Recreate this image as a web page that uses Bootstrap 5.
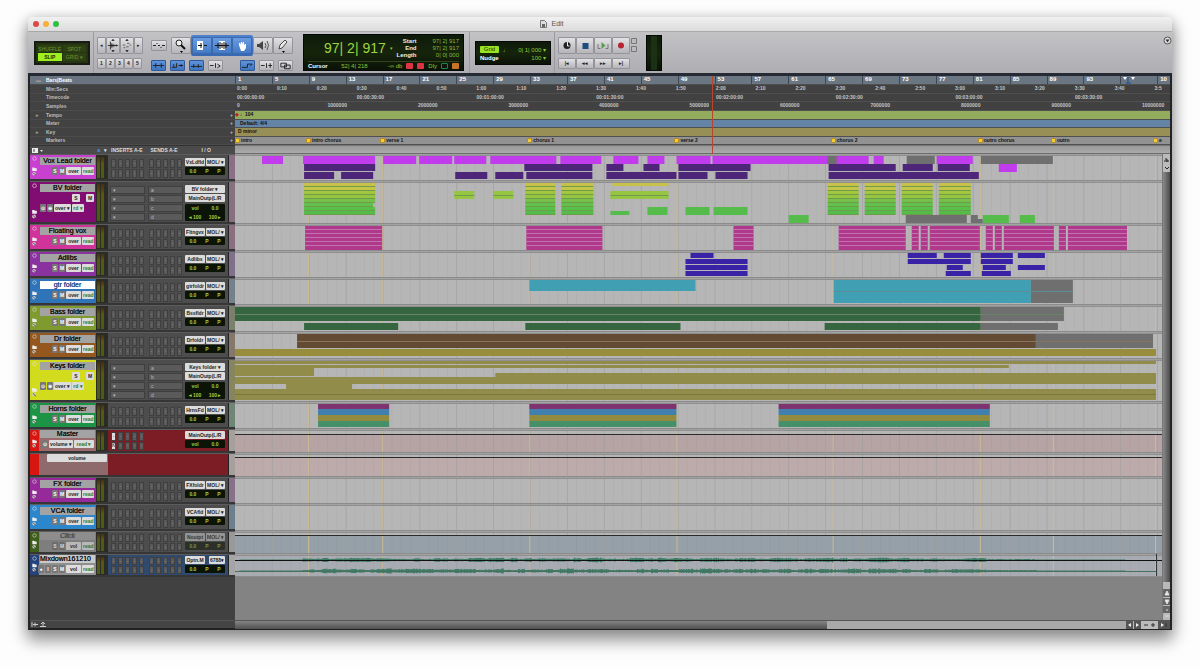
<!DOCTYPE html>
<html lang="en">
<head>
<meta charset="utf-8">
<meta name="viewport" content="width=device-width, initial-scale=1">
<title>Edit</title>
<link href="https://cdn.jsdelivr.net/npm/bootstrap@5.3.0/dist/css/bootstrap.min.css" rel="stylesheet">
<style>
body{background:#fdfdfd;font-family:"Liberation Sans",Arial,sans-serif;font-size:5px;line-height:8px;color:#222}
button,input,select{font:inherit;color:inherit;border:0;padding:0;margin:0;line-height:8px}
button{overflow:hidden;white-space:nowrap;text-align:center}
svg{display:block}
.win{margin:17px 28px 30px;border-radius:5px;box-shadow:0 9px 16px 2px #0006,0 0 12px #0002}
.titlebar{height:15px;background:linear-gradient(#f1f1f1,#dcdcdc);border-radius:5px 5px 0 0;border-bottom:1px solid #a9a9a9;position:relative;font-size:7px;color:#555}
.dot{width:6px;height:6px;border-radius:50%}
.lights{gap:4px;padding-left:5px}
.toolbar{height:41px;padding-left:6px;background:linear-gradient(#c3c3c6,#adadb2)}
.sep{width:1px;align-self:stretch;background:#9a9a9f;margin:0 3px}
.sep.wide{margin:0 5px}
.lcd{background:linear-gradient(#0e1a0a,#16240c 50%,#0a1206);border:1px solid #050805;color:#8ec63a}
.modes{width:56px;height:24px;padding:2px;border:2px solid #181d14;display:grid;grid-template-columns:1fr 1fr;gap:1px;background:#243311}
.modes button{background:#2d4014;color:#6c9430}
.modes button.on{background:#9ff021;color:#1c2b08;font-weight:bold}
.tb{background:linear-gradient(#e2e2e4,#b5b5ba);border:1px solid #94949a;border-radius:1px;display:flex;align-items:center;justify-content:center;color:#222}
.tb svg{width:100%;height:100%}
.tb.big{height:17px}.tb.sm{height:11px;font-weight:bold}
.w9{width:9px}.w14{width:14px}.w15{width:15px}.w16{width:16px}.w18{width:18px}.w20{width:20px}
.tb.blue{background:linear-gradient(#5f93da,#3f74c0);border-color:#2d5899}
.bluebox{background:linear-gradient(#4d82ce,#3768b2);border-radius:2px;padding:2px 1px}
.bluebox .tb{background:linear-gradient(#6a9ce0,#4379c6);border-color:#3b69a9}
.counter{width:161px;height:37px;margin-left:2px}
.cnt-main{font-size:14px;line-height:17px;color:#9ed53c;white-space:nowrap}
.cnt-lab{font-size:6px;line-height:7px;color:#eee;font-weight:bold}
.cnt-val{font-size:6px;line-height:7px;color:#86b93b;text-align:right;white-space:nowrap}
.cnt-foot{border-top:1px solid #34441f;height:9px;font-size:6px;white-space:nowrap}
.sq{width:7px;height:6px;border-radius:1px;display:inline-block}
.gridbox{width:76px;height:24px;font-size:6px}
.gridon{background:#98e51f;color:#20300a;width:19px;border-radius:1px;line-height:7px}
.main{background:#414141;border-left:2px solid #242424;border-right:2px solid #242424;border-bottom:2px solid #222;border-top:3px solid #252a34}
.side{width:205px;flex:none}
.rl{display:grid;grid-template-rows:9px 9px 8px 9px 9px 8px 9px 8px}
.rl>div{overflow:hidden;white-space:nowrap}
.side .rl>div{background:#424242;border-bottom:1px solid #4b4b4b;color:#bcbcbc;font-weight:bold;line-height:7px;display:flex;align-items:center}
.side .rl>div:first-child{background:#6a7480;color:#fff}
.side .rl i{width:16px;font-style:normal;padding-left:6px;color:#999}
.side .rl b{margin-left:auto;padding-right:2px}
.rulers>div{position:relative;border-bottom:1px solid #505050;color:#c4c4c4;line-height:7px;font-weight:bold}
.rulers>div:first-child{background:#6b7683;color:#fff}
.rulers .inner{position:absolute;inset:0 8px 0 0}
.rulers span{position:absolute;top:0;white-space:nowrap}
.rulers .tick{border-left:1px solid #3f4852;padding-left:2px;font-size:6px;height:8px}
.rulers .r-tempo{background:#92ab5c;color:#111}.rulers .r-meter{background:#6484a6;color:#111}
.rulers .r-key{background:#988f56;color:#111}.rulers .r-mark{background:#929292;color:#111}
.mk{display:inline-block;width:5px;height:5px;border-radius:1px;background:#f2cf3a;border:1px solid #b98b1c;margin-right:1px;vertical-align:-1px}
.colhead{height:9px;background:#4b4b4b;color:#ddd;font-weight:bold;border-top:1px solid #333}
.emptybar{height:9px;background:linear-gradient(#989898,#ababab);border-top:1px solid #777;border-bottom:1px solid #6b6b6b}
.trk{background:#4d4d4d;border-bottom:2px solid #363636;border-top:1px solid #5c5c5c;height:27px;overflow:hidden}
.trk.tall{height:43px}.trk.low{height:24px}.trk.mid{height:23px}
.strip{width:9px;flex:none}.strip svg{width:9px;height:100%}
.head{width:57px;flex:none;padding-top:2px}
.low .head,.mid .head{padding-top:0}
.tname{display:block;width:55px;height:8px;margin-left:1px;background:#a3a3a3;color:#151515;font-size:7px;text-align:center;text-shadow:0 0 0 #000}
.tname.sel{background:#fff;color:#2d62b8}
.tname.dim{color:#666}.tname.long{text-align:left;background:#c9c9cb}
.tbtn{background:#dcdcdc;color:#222;border-radius:1px;height:8px;line-height:8px;font-weight:bold;padding:0 1px;flex:none}
.tbtn.s{background:#777;color:#fff;width:6px}.tbtn.v{width:15px}.tbtn.r{width:12px;color:#277a33}
.tbtn.q{width:8px}.ctl{height:8px;gap:1px;margin-top:2px;justify-content:flex-end;padding-right:2px}
.meter{width:12px;flex:none;padding:2px 0 1px 1px;background:#2c2c26}
.meter div{width:3px;height:100%;background:linear-gradient(#4a2d10,#5a5712 30%,#485c14);margin-right:1px}
.slots{display:grid;grid-template-columns:repeat(5,5px);gap:1px 2px;width:38px;flex:none;padding:4px 0 1px 3px;grid-auto-rows:1fr}
.slots button{background:#5a5a5a;border:1px solid #3f3f3f;color:#bbb;line-height:5px}
.slots.rowsl{grid-template-columns:1fr;padding:4px 1px 1px 2px;gap:1px}
.slots.rowsl button{text-align:left;padding-left:2px}
.slots button.lit{background:#ddd;color:#111}
.mid .slots,.low .slots{padding-top:2px}
.io{width:42px;flex:none;padding:3px 1px 0;display:flex;flex-direction:column;gap:1px}
.mid .io,.low .io{padding-top:1px}
.io .tbtn{overflow:hidden}
.io .nm{width:20px;padding:0}
.vol{background:#0b1407;color:#a2cf45;font-weight:bold;height:8px;line-height:8px;border-radius:1px;display:flex;justify-content:space-around}
.vol.two{height:17px;flex-wrap:wrap;margin-top:1px}
.vol.two span{width:50%;text-align:center}
.tint{width:7px;flex:none;border-left:1px solid #222}
.lane{background:#b6b6b6;min-width:0}
.lane svg{width:100%;height:100%}
.vsb{width:8px;flex:none;background:linear-gradient(90deg,#8a8a8a,#4b4b4b);border-left:1px solid #777}
.vsb svg{width:7px}
.playline{position:absolute;top:0;bottom:0;width:1px;background:#b8452e}
.foot{height:8px;background:#444;border-top:1px solid #555}
.hsb{height:8px;background:#a9a9a9}
.hsb div{background:linear-gradient(#858585,#505050)}
.void{height:43px}
.autoh{background:#8f6a6d;width:69px}
.autoh select{width:60px;appearance:none;text-align:center}
</style>
</head>
<body>
<div class="win">
  <header class="titlebar d-flex align-items-center justify-content-center">
    <div class="position-absolute start-0 d-flex lights"><span class="dot" style="background:#df4744"></span><span class="dot" style="background:#f5b03a"></span><span class="dot" style="background:#2fc03f"></span></div>
    <svg width="7" height="8" viewBox="0 0 7 8"><path d="M.5.5h4l2 2v5h-6z" fill="#ddd" stroke="#777"/><path d="M2 4h3v3H2z" fill="#666"/></svg><span class="ms-1 me-5 pe-5">Edit</span>
  </header>
  <div class="toolbar d-flex align-items-center" id="toolbar">
    <div class="lcd modes"><button>SHUFFLE</button><button>SPOT</button><button class="on">SLIP</button><button>GRID ▾</button></div>
    <div class="sep"></div>
    <div class="d-flex flex-column gap-1 me-2">
      <div class="d-flex">
        <button class="tb big w9" aria-label="Zoom out">◂</button>
        <button class="tb big w14" aria-label="Audio zoom"><svg viewBox="0 0 14 15"><path d="M1 7.500h12M4 3v9M5.500 5v5M7 5.500v4M9 6.500v2M11 6.500v2" stroke="#222"/><path d="M5 2l2-2 2 2zM5 13l2 2 2-2z"/></svg></button>
        <button class="tb big w14" aria-label="MIDI zoom"><svg viewBox="0 0 14 15"><path d="M2 7h3M7 5h3M6 9h3M10 7h2M3 10h2" stroke="#555"/><path d="M5 2l2-2 2 2zM5 13l2 2 2-2z"/></svg></button>
        <button class="tb big w9" aria-label="Zoom in">▸</button>
      </div>
      <div class="d-flex"><button class="tb sm w9">1</button><button class="tb sm w9">2</button><button class="tb sm w9">3</button><button class="tb sm w9">4</button><button class="tb sm w9">5</button></div>
    </div>
    <div class="d-flex flex-column me-2">
      <div class="d-flex align-items-center">
        <button class="tb sm w16 me-1" aria-label="Zoom toggle"><svg viewBox="0 0 14 9"><path d="M1 4.500h3M10 4.500h3M6 4.500h2M5 2v1M9 6v1" stroke="#222"/></svg></button>
        <button class="tb big w20" aria-label="Zoomer"><svg viewBox="0 0 18 15"><circle cx="7" cy="5" r="3" fill="#eee" stroke="#222"/><path d="M9 7l4 4" stroke="#111" stroke-width="2"/><path d="M8 13h3l-1.500 2z"/></svg></button>
        <div class="bluebox d-flex">
          <button class="tb big w20" aria-label="Trim"><svg viewBox="0 0 18 15"><path d="M4 3h6v9H4z" fill="#fff"/><path d="M5 7.500h4M8 5v5M11 7.500h3" stroke="#111"/></svg></button>
          <button class="tb big w20" aria-label="Selector"><svg viewBox="0 0 18 15"><path d="M6 3h6v9H6z" fill="#fff"/><path d="M2 7.500h14M5 5v5M7 4v7M9 5v5M11 4v7M13 5v5" stroke="#111"/></svg></button>
          <button class="tb big w20" aria-label="Grabber"><svg viewBox="0 0 18 15"><path d="M6 7V5h1v2l1-3h1v2l1-2h1v3l1-1h1v4l-2 3H8z" fill="#fff"/></svg></button>
        </div>
        <button class="tb big w20" aria-label="Scrubber"><svg viewBox="0 0 18 15"><path d="M3 6h2l4-3v9L5 9H3z" fill="#444"/><path d="M11 5q2 2.500 0 5M13 3q3 4 0 9" fill="none" stroke="#555"/></svg></button>
        <button class="tb big w20" aria-label="Pencil"><svg viewBox="0 0 18 15"><path d="M5 11l1-4 5-5 2 2-5 6z" fill="#eee" stroke="#444"/><path d="M8 13h3l-1.500 2z"/></svg></button>
      </div>
      <div class="d-flex gap-1 mt-1" id="row2"></div>
    </div>
    <div class="lcd counter px-1">
      <div class="d-flex align-items-center" style="height:26px">
        <div class="cnt-main ms-3">97| 2| 917</div><span class="ms-1">▾</span>
        <div class="cnt-lab text-end ms-auto me-3">Start<br>End<br>Length</div>
        <div class="cnt-val">97| 2| 917<br>97| 2| 917<br>0| 0| 000</div>
      </div>
      <div class="cnt-foot d-flex align-items-center gap-1"><span class="text-white fw-bold">Cursor</span><span class="ms-auto me-3">52| 4| 218</span><span>-∞ db</span><i class="sq bg-danger"></i><i class="sq bg-danger"></i><span>Dly</span><i class="sq border border-success"></i><i class="sq" style="background:#c97328"></i></div>
    </div>
    <div class="sep wide"></div>
    <div class="lcd gridbox px-1">
      <div class="d-flex align-items-center pt-1"><button class="gridon">Grid</button><span class="ms-1">♩</span><span class="ms-auto">0| 1| 000 ▾</span></div>
      <div class="d-flex align-items-center"><span class="text-white fw-bold">Nudge</span><span class="ms-auto">100 ▾</span></div>
    </div>
    <div class="sep"></div>
    <div class="d-flex flex-column gap-1">
      <div class="d-flex">
        <button class="tb big w18" aria-label="Online"><svg viewBox="0 0 15 15"><circle cx="7.500" cy="7.500" r="3.500" fill="#222"/><path d="M8 4v4h2" stroke="#eee" fill="none"/></svg></button>
        <button class="tb big w18" aria-label="Stop"><svg viewBox="0 0 15 15"><path d="M5 5h6v6H5z" fill="#1e4c80"/></svg></button>
        <button class="tb big w18" aria-label="Play"><svg viewBox="0 0 15 15"><path d="M6 4l4 3.500L6 11z" fill="#5f9c50"/><path d="M5 10.500H2.500V6M10 10.500h2.500V6" fill="none" stroke="#777"/></svg></button>
        <button class="tb big w18" aria-label="Record"><svg viewBox="0 0 15 15"><circle cx="7.500" cy="7.500" r="3" fill="#b52430"/></svg></button>
      </div>
      <div class="d-flex"><button class="tb sm w18">|◂</button><button class="tb sm w18">◂◂</button><button class="tb sm w18">▸▸</button><button class="tb sm w18">▸|</button></div>
    </div>
    <svg width="8" height="37" viewBox="0 0 8 37"><path d="M1.500 4.500h5v5h-5zM1.500 12.500h5v5h-5z" fill="#bbb" stroke="#777"/></svg>
    <div class="lcd ms-2" style="width:16px;height:36px"><div class="h-100 mx-1" style="background:#1c3015"></div></div>
    <svg width="9" height="9" viewBox="0 0 9 9" class="ms-auto align-self-start mt-1"><circle cx="4.500" cy="4.500" r="3.500" fill="#ddd" stroke="#555"/><path d="M2.500 3.500h4l-2 3z" fill="#333"/></svg>
  </div>

  <main class="main">
    <div class="d-flex">
      <div class="side"><div class="rl">
        <div><i>▬</i>Bars|Beats</div><div><i></i>Min:Secs</div><div><i></i>Timecode</div><div><i></i>Samples</div>
        <div><i>▸</i>Tempo<b>+</b></div><div><i></i>Meter<b>+</b></div><div><i>▸</i>Key<b>+</b></div><div><i></i>Markers<b>+</b></div>
      </div>
      <div class="colhead d-flex align-items-center">
        <svg width="14" height="7" viewBox="0 0 14 7"><path d="M2 1h6v5H2z" fill="#eee"/><path d="M3 2h2v3H3z" fill="#999"/><path d="M10 3h3l-1.500 2z" fill="#ddd"/></svg>
        <span class="ms-auto me-1" style="color:#5c8de0">a</span><span class="me-1">▾</span><span class="me-2">INSERTS A-E</span><span class="me-4">SENDS A-E</span><span class="me-4">I / O</span>
      </div></div>
      <div class="flex-fill position-relative">
        <div class="rl rulers" id="rulers"></div>
        <div class="emptybar"></div>
        <div class="position-absolute top-0 bottom-0 start-0 pe-none" style="right:8px"><div class="playline" style="left:51.500%"></div></div>
      </div>
    </div>
    <div class="d-flex">
      <div class="flex-fill" id="tracks"></div>
      <div class="vsb d-flex flex-column justify-content-between">
        <svg height="18" viewBox="0 0 7 18"><path d="M0 0h7v18H0z" fill="#bbb"/><path d="M1 7h5M2 5h2v3M2 13l2 2 2-2" stroke="#222" fill="none"/></svg>
        <svg height="38" viewBox="0 0 7 38"><path d="M0 0h7v38H0z" fill="#b9b9b9"/><path d="M0 7h7v8H0zM0 16h7v7H0zM0 24h7v7H0z" fill="#666"/><path d="M2 13l2-4 2 4zM2 18h4l-2 4zM3 28h2M2 34h4" fill="#eee" stroke="#ddd"/></svg>
      </div>
    </div>
    <div class="foot d-flex">
      <div class="side d-flex align-items-center"><svg width="30" height="7" viewBox="0 0 30 7"><path d="M2 1v5M3 3.500h5M5 1.500v4M10 5.500h6M13 5V2M11 3l2-2 2 2" stroke="#ccc" fill="none"/></svg></div>
      <div class="hsb flex-fill d-flex"><div style="width:63.300%"></div><svg width="44" height="8" viewBox="0 0 44 8" class="ms-auto"><path d="M0 0h44v8H0z" fill="#bbb"/><path d="M0 0h7v8H0zM8 0h7v8H8zM32 0h12v8H32z" fill="#555"/><path d="M5 2L2 4l3 2zM10 2l3 2-3 2zM35 2l3 2-3 2z" fill="#eee"/><path d="M18 4h4M25 4h4M27 2v4M40 2v4" stroke="#333"/></svg></div>
    </div>
  </main>
</div>

<script>
// Timeline geometry: units run from X0 to X0 + SPAN across the width of a lane.
const X0 = 235, SPAN = 926;
const pct = x => ((x - X0) / SPAN * 100).toFixed(3) + '%';
const at = (x, html, cls = '') => `<span class="${cls}" style="left:${pct(x)}">${html}</span>`;
const range = n => [...Array(n).keys()];

// Second toolbar row
const row2 = [['blue','M1 4.500h12M4 2v5M10 2v5'],['blue','M1 6.500h5V2M8 4.500h5M3 3v3M11 3v3'],['blue','M1 5.500h12M4 3v4M9 3v4'],['','M1 4.500h4M7 2v5M9 3l3 2-3 2'],null,['blue','M1 6.500h6V3h5M10 5l2-2'],['','M1 4.500h4M9 4.500h4M7 2v5M11 2v5'],['','M2 2h6v4H2zM6 4h6v4H6z']];
document.getElementById('row2').innerHTML = row2.map(b => b
  ? `<button class="tb sm w15 ${b[0]}" aria-label="Option"><svg viewBox="0 0 14 9"><path d="${b[1]}" fill="none" stroke="#222"/></svg></button>`
  : '<span style="width:9px"></span>').join('');

// Rulers
const two = n => String(n).padStart(2, '0');
const marks = [[235,'intro'],[306,'intro chorus'],[380,'verse 1'],[527,'chorus 1'],[674,'verse 2'],[830,'chorus 2'],[977,'outro chorus'],[1050,'outro'],[1152,'e']];
const rul = [
  ['', range(26).map(i => at(235 + i * 36.85, i === 24 ? '<svg width="14" height="8" viewBox="0 0 14 8"><path d="M0 1h4L2 4zM8 1h4l-2 3z" fill="#fff"/><path d="M3 7h5M5 1v6" stroke="#1f4f99"/></svg>' : i === 25 ? '10' : 1 + i * 4, 'tick')).join('')],
  ['', range(24).map(i => at(237 + i * 39.85, i === 23 ? '3:5' : `${Math.floor(i / 6)}:${i % 6}0`)).join('')],
  ['', range(8).map(i => at(237 + i * 119.6, `00:${two(i >> 1)}:${i % 2 ? 30 : '00'}:00`)).join('')],
  ['', range(11).map(i => at(237 + i * 90.4, i ? i * 1000000 : 0)).join('')],
  ['r-tempo', at(235, '<b style="color:#b3271b">◆</b>') + at(240, '♩104')],
  ['r-meter', at(240, 'Default: 4/4')],
  ['r-key', at(238, 'D minor')],
  ['r-mark', marks.map(m => at(m[0], `<i class="mk"></i>${m[1]}`)).join('')]
];
document.getElementById('rulers').innerHTML = rul.map(r => `<div class="${r[0]}"><div class="inner">${r[1]}</div></div>`).join('');

// Clips: c(colour, top, bottom, [x1, x2, ...])
const c = (f, y1, y2, xs) => { let s = ''; for (let i = 0; i < xs.length; i += 2) s += `<path d="M${xs[i]} ${y1}H${xs[i+1]}V${y2}H${xs[i]}z" fill="${f}"/>`; return s; };
const G = '#6f6f6f', M = '#c13cec', P = '#4d2579', K = '#b0398d', A = '#3a22a6', T = '#419fb3', B = '#35663f', D = '#624a33', O = '#928c4b', GR = '#55bb4b';
const bvCols = ['#c9c24a','#c3c646','#a2c63e','#96c541','#74c04a','#62c04c','#55c148','#52bd4a'];
const stack = xs => bvCols.map((f, i) => c(f, 183 + i * 4, 186 + i * 4, xs) + c('#719a4a', 186 + i * 4, 187 + i * 4, xs)).join('');
const fl = [305,382,526,602,733,753,838,905,911,918,920,927,929,979,985,992,994,1001,1003,1053,1058,1065,1067,1126];
function wave() {
  let s = '', r = 7, env = 1;
  const rnd = () => (r = (r * 16807) % 2147483647) / 2147483647;
  for (const cy of [560, 571]) for (let x = 240; x < 1125; x += 1) {
    if (x % 7 === 0) env = rnd();
    const amp = x < 303 ? .4 : x > 1035 ? .4 : x > 985 ? .9 : .9 + env * 1.3;
    const h = Math.max(.5, amp * (.7 + rnd() * .5));
    s += `M${x} ${(cy - h).toFixed(1)}V${(cy + h).toFixed(1)}`;
  }
  return `<path d="${s}" stroke="#3f7c66" stroke-width="1"/><path d="M235 560.500H1161" stroke="#111"/><path d="M235 571.500H1155" stroke="#47705f"/><path d="M1155.500 554V577" stroke="#333"/>`;
}
const tracks = [
 {n:'Vox Lead folder',col:'#c93fd0',h:27,io:'VxLdfld',tint:'#8b6f86',clips:
   c(M,156,164,[262,283,303,375,383,416,419,452,454,486,490,556,560,601,613,638,647,664,676,710,712,868,873,883,936,972])+c(G,156,164,[827,836,906,934,980,1052])
   +c(P,164,171,[304,375,524,592,606,623,643,659,678,750,828,895,902,932,937,969])+c(M,164,172,[998,1016])
   +c(P,172,179,[304,334,341,373,455,487,495,523,526,592,606,676,678,707,715,747,828,978])},
 {n:'BV folder',col:'#820d72',h:43,tall:1,io:'BV folder',tint:'#87707f',clips:
   stack([304,375,525,555,561,593,827,858,864,895,901,932,938,970])+c('#b6b6b6',203,207,[373,375])+c('#c9c24a',183,186,[612,668])+c('#96c541',191,199,[454,474,493,513,610,668])
   +c('#719a4a',195,196,[454,474,493,513,610,668])+c(GR,211,215,[610,629])+c(GR,207,215,[647,667,685,709,713,747])+c(G,215,223,[905,966])+c(G,215,219,[970,977])+c(G,219,223,[970,982])+c(GR,215,223,[788,808,982,1008,1019,1034])},
 {n:'Floating vox',col:'#d0349a',h:27,io:'Fltngvx',tint:'#8b6f80',clips:c(K,226,250,fl)+range(5).map(i=>c('#c173a9',229+i*4,230+i*4,fl)).join('')},
 {n:'Adlibs',col:'#8932a0',h:27,io:'Adlibs',tint:'#80708b',clips:
   c(A,253,258,[690,713,907,936,943,970,980,1012,1017,1044])+c(A,259,264,[685,747,907,970,980,1012])+c(A,265,270,[685,747,946,962,982,1005,1017,1044])+c(A,271,276,[685,747,945,970,981,1010])},
 {n:'gtr folder',col:'#2f74b8',h:27,sel:1,io:'gtrfoldr',tint:'#74808b',clips:c(T,280,291,[529,695])+c(T,280,303,[833,1030])+c(G,280,303,[1030,1072])+c('#5c8e98',291,292,[833,1072])},
 {n:'Bass folder',col:'#7f9a2e',h:27,io:'Bssfldr',tint:'#7b806d',clips:c(B,307,321,[235,980])+c(G,307,321,[980,1063])+c('#668466',314,315,[235,1063])+c(B,323,330,[304,398,525,680,824,980])+c(G,323,330,[980,1057])},
 {n:'Dr folder',col:'#94571d',h:27,io:'Drfoldr',tint:'#85786b',clips:c(D,334,348,[297,1035])+c(G,334,348,[1035,1152])+c('#8a7460',341,342,[297,1152])+c('#988d3c',349,356,[235,1155])},
 {n:'Keys folder',col:'#d3dc1c',h:43,tall:1,io:'Keys folder',tint:'#85855f',clips:
   c(O,361,364,[235,1155])+c(O,365,368,[235,1008])+c(O,368,376,[235,314])+c(O,373,377,[495,1155])+c(O,377,384,[235,1155])+c(O,384,389,[286,352])+c(O,389,400,[235,1155])+c('#7c763b',394,395,[235,1155])},
 {n:'Horns folder',col:'#1c9445',h:27,io:'HrnsFd',tint:'#6f8575',clips:c('#7f3270',404,409,[318,389,529,676,778,989])+c('#4180ae',409,415,[318,389,529,676,778,989])+c('#918b3f',415,421,[318,389,529,676,778,989])+c('#459068',421,427,[318,389,529,676,778,989])},
 {n:'Master',col:'#d8150e',h:24,master:1,bg:'#b6a3a3',tint:'#a6a09c',line:434},
 {auto:1,col:'#d8150e',h:24,bg:'#bcabaa',tint:'#a6a09c',line:457},
 {n:'FX folder',col:'#972a9a',h:27,io:'FXfoldr',tint:'#88708a'},
 {n:'VCA folder',col:'#2b86cc',h:27,io:'VCAfld',tint:'#6b808c'},
 {n:'Click',col:'#3e5c1c',h:23,dim:1,io:'Noutpt',bg:'#95a0a8',tint:'#999',line:535},
 {n:'Mixdown161210',col:'#24427c',h:23,long:1,io:'Optn.M',bg:'#a9abb3',tint:'#a5a5a5',clips:wave()}
];
const stripSvg = t => `<svg viewBox="0 0 9 ${t.h}"><circle cx="4.500" cy="4" r="2" fill="none" stroke="#ddd" stroke-opacity=".7"/><path d="M2 ${t.h-13}h2l1 1h2v3H2z" fill="#eee"/><circle cx="4" cy="${t.h-6}" r="2" fill="#ccc"/><path d="M3 ${t.h-7}l3 3" stroke="#444"/></svg>`;
const btn = (cls, txt) => `<button class="tbtn ${cls}">${txt}</button>`;
const ctl = s => `<div class="d-flex ctl">${s}</div>`;
function slots(t, send) {
  if (t.tall) return `<div class="slots rowsl">${range(4).map(i => `<button>${send ? 'abcd'[i] : '▾'}</button>`).join('')}</div>`;
  if (t.master && send) return '<div class="slots"></div>';
  return `<div class="slots">${range(10).map(i => `<button class="${t.master && i % 5 === 0 ? 'lit' : ''}">${t.master && i === 5 ? 'K' : '·'}</button>`).join('')}</div>`;
}
function left(t) {
  const bgAll = t.master || t.auto ? '#7c1d26' : t.long ? '#2f4a6c' : '#4d4d4d';
  const tint = `<div class="flex-fill"></div><div class="tint" style="background:${t.tint}"></div>`;
  if (t.auto) return `<div class="side d-flex trk low" style="background:${bgAll}"><div class="strip" style="background:${t.col}"></div><div class="autoh ps-2"><select class="tbtn" aria-label="Automation"><option>volume</option></select></div>${tint}</div>`;
  const hc = t.dim || t.long ? '#8f8f8f' : t.master ? '#9a6a6c' : t.col;
  const controls = t.tall ? ctl(btn('q','S') + '<span style="width:4px"></span>' + btn('q','M')) + ctl(btn('s','⊙') + btn('s','⊕') + `<button class="tbtn" style="width:17px">over ▾</button>` + btn('r','rd ▾') + '<span style="width:9px"></span>')
    : t.master ? ctl(btn('s','⊙') + `<button class="tbtn" style="width:24px">volume ▾</button>` + `<button class="tbtn" style="width:20px;color:#277a33">read ▾</button>`)
    : ctl((t.long ? btn('s','●') + btn('s','I') : '') + btn('s','S') + btn('s','M') + btn('v', t.dim || t.long ? 'vol' : 'over') + btn('r','read'));
  const io = t.tall ? btn('', t.io + ' ▾') + btn('', 'MainOutp(L/R') + '<div class="vol two"><span>vol</span><span>0.0</span><span>◂ 100</span><span>100 ▸</span></div>'
    : t.master ? btn('', 'MainOutp(L/R') + '<div class="vol"><span>vol</span><span>0.0</span></div>'
    : `<div class="d-flex justify-content-between"><button class="tbtn nm">${t.io}</button><button class="tbtn">${t.long ? '6788▾' : 'MOL/ ▾'}</button></div><div class="vol"><span>0.0</span><span>P</span><span>P</span></div>`;
  const size = t.tall ? 'tall' : t.h === 24 ? 'low' : t.h === 23 ? 'mid' : '';
  return `<div class="side d-flex trk ${size}" style="background:${bgAll}"><div class="strip" style="background:${t.col}">${stripSvg(t)}</div><div class="head ${t.dim ? 'opacity-75' : ''}" style="background:${hc}"><button class="tname ${t.sel ? 'sel' : ''} ${t.dim ? 'dim fst-italic' : ''} ${t.long ? 'long' : ''}">${t.n}</button>${controls}</div><div class="meter d-flex"><div></div><div></div></div>${slots(t)}${slots(t, 1)}<div class="io ${t.dim ? 'opacity-50' : ''}">${io}</div>${tint}</div>`;
}
let top0 = 154;
document.getElementById('tracks').innerHTML = tracks.map(t => {
  const y = top0, b = y + t.h; top0 = b;
  const grid = range(25).map(i => c('#a6a6a6', y, b, [272 + i * 36.85, 272.6 + i * 36.85])).join('') + range(100).map(i => c('#00000007', y, b, [244 + i * 9.212, 245 + i * 9.212])).join('')
    + marks.slice(1).map(m => c('#cbbb94', y, b, [m[0] + 2, m[0] + 3])).join('');
  const svg = `<svg viewBox="${X0} ${y} ${SPAN} ${t.h}" preserveAspectRatio="none">${t.bg ? c(t.bg, t.line ? t.line : y, b, [X0, 1161]) : ''}${grid}${c('#a2a2a2', y, y + 1, [X0, 1161])}${c('#8f8f8f', y + 1, y + 2, [X0, 1161])}${t.clips || ''}${t.line ? c('#2b2b2b', t.line, t.line + 1, [X0, 1161]) : ''}${c('#8b8b8b', b - 1, b, [X0, 1161])}</svg>`;
  return `<div class="d-flex">${left(t)}<div class="lane flex-fill" style="height:${t.h}px">${svg}</div></div>`;
}).join('') + '<div class="d-flex void"><div class="side"></div><div class="flex-fill" style="background:#838383"></div></div>';
</script>
<script src="https://cdn.jsdelivr.net/npm/bootstrap@5.3.0/dist/js/bootstrap.bundle.min.js"></script>
</body>
</html>
